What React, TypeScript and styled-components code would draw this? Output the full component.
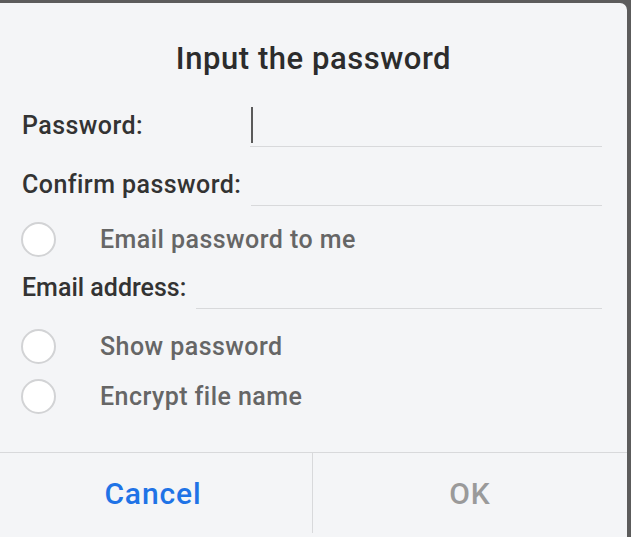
import React from "react";
import styled, { createGlobalStyle } from "styled-components";

const Global = createGlobalStyle`
  html, body {
    margin: 0;
    padding: 0;
    background: #5c5c5c;
    height: 537px;
    overflow: hidden;
  }
  * { box-sizing: border-box; }
`;

const Page = styled.div`
  padding-top: 3px;
  height: 537px;
`;

const Dialog = styled.div`
  width: 627px;
  height: 534px;
  background: #f4f5f7;
  border-top-right-radius: 7px;
  display: flex;
  flex-direction: column;
  font-family: Roboto, "Liberation Sans", sans-serif;
`;

const Title = styled.h1`
  margin: 0;
  padding: 38px 0 27px;
  line-height: 36px;
  font-size: 31px;
  font-weight: 500;
  letter-spacing: 0.55px;
  color: #2c2c2c;
  text-align: center;
`;

const Form = styled.div`
  display: flex;
  flex-direction: column;
  padding: 0 25px 0 22px;
`;

const FieldRow = styled.div<{ $top: number }>`
  display: flex;
  align-items: center;
  gap: 10px;
  margin-top: ${(p) => p.$top}px;
`;

const Label = styled.label<{ $width?: number; $spacing?: number }>`
  flex: none;
  min-width: ${(p) => (p.$width ? `${p.$width}px` : "auto")};
  font-size: 25px;
  font-weight: 500;
  letter-spacing: ${(p) => p.$spacing ?? 0.45}px;
  color: #333333;
  white-space: nowrap;
`;

const InputLine = styled.div`
  flex: 1;
  height: 43px;
  border-bottom: 1px solid #d8d9db;
  display: flex;
  align-items: center;
`;

const Caret = styled.span`
  display: block;
  width: 2px;
  height: 36px;
  margin-left: 1px;
  margin-top: -1px;
  background: #5a5a5a;
`;

const RadioRow = styled.div<{ $top: number }>`
  display: flex;
  align-items: center;
  gap: 44px;
  height: 34px;
  margin-top: ${(p) => p.$top}px;
  margin-left: -1px;
`;

const Radio = styled.span`
  flex: none;
  width: 35px;
  height: 35px;
  border-radius: 50%;
  border: 2px solid #d2d3d5;
  background: #ffffff;
`;

const RadioText = styled.span`
  font-size: 25px;
  font-weight: 500;
  letter-spacing: 0.45px;
  color: #666666;
`;

const Footer = styled.div`
  margin-top: auto;
  height: 85px;
  border-top: 1px solid #d8d9db;
  display: grid;
  grid-template-columns: 312px 1fr;
`;

const FooterButton = styled.button<{ $primary?: boolean }>`
  border: none;
  background: transparent;
  font-family: Roboto, "Liberation Sans", sans-serif;
  font-size: 30px;
  font-weight: 500;
  letter-spacing: 0.9px;
  color: ${(p) => (p.$primary ? "#1f73e6" : "#9a9a9a")};
  display: flex;
  align-items: center;
  justify-content: center;
  padding: 0 ${(p) => (p.$primary ? 6 : 0)}px 0 0;
  height: 80px;
  & + & {
    border-left: 1px solid #d8d9db;
  }
`;

export default function App() {
  return (
    <Page>
      <Global />
      <Dialog>
        <Title>Input the password</Title>
        <Form>
          <FieldRow $top={0}>
            <Label $width={218}>Password:</Label>
            <InputLine>
              <Caret />
            </InputLine>
          </FieldRow>
          <FieldRow $top={16}>
            <Label $width={218}>Confirm password:</Label>
            <InputLine />
          </FieldRow>
          <RadioRow $top={16}>
            <Radio />
            <RadioText>Email password to me</RadioText>
          </RadioRow>
          <FieldRow $top={10}>
            <Label $spacing={0}>Email address:</Label>
            <InputLine />
          </FieldRow>
          <RadioRow $top={20}>
            <Radio />
            <RadioText>Show password</RadioText>
          </RadioRow>
          <RadioRow $top={16}>
            <Radio />
            <RadioText>Encrypt file name</RadioText>
          </RadioRow>
        </Form>
        <Footer>
          <FooterButton $primary>Cancel</FooterButton>
          <FooterButton>OK</FooterButton>
        </Footer>
      </Dialog>
    </Page>
  );
}
